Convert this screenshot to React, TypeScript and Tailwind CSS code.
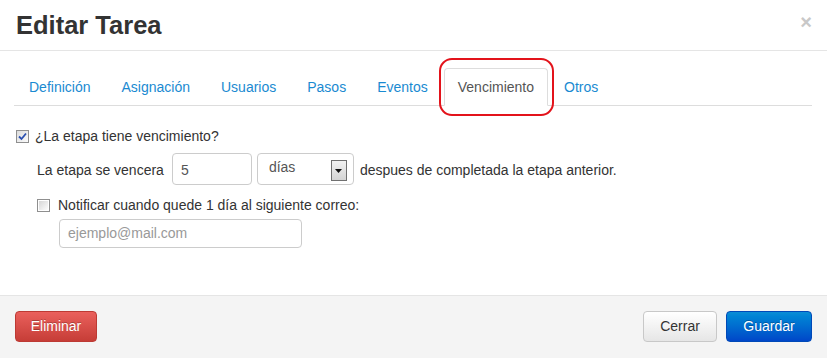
import React from "react";

const tabs = ["Definición", "Asignación", "Usuarios", "Pasos", "Eventos", "Vencimiento", "Otros"];

function CheckedBox() {
  return (
    <span className="inline-flex h-[13px] w-[13px] items-center justify-center border border-[#8f8f8f] bg-linear-to-br from-[#dcdcdc] to-[#fbfbfb]">
      <svg width="9" height="9" viewBox="0 0 9 9">
        <path d="M1 4.5 L3.5 7 L8 1.5" fill="none" stroke="#2a4fb0" strokeWidth="1.8" />
      </svg>
    </span>
  );
}

function EmptyBox() {
  return (
    <span className="inline-flex h-[13px] w-[13px] items-center justify-center border border-[#8f8f8f] bg-white">
      <span className="h-[9px] w-[9px] bg-linear-to-br from-[#d6d6d6] to-[#fcfcfc]" />
    </span>
  );
}

export default function App() {
  return (
    <div
      className="relative flex h-[358px] w-[827px] flex-col overflow-hidden bg-white text-[14px] text-[#333]"
      style={{ fontFamily: '"Liberation Sans", Arial, sans-serif' }}
    >
      {/* header */}
      <div className="flex h-[51px] shrink-0 items-center justify-between border-b border-[#e5e5e5] pl-[16px] pr-[15px]">
        <h3 className="text-[25.5px] font-bold leading-[30px] text-[#333]">Editar Tarea</h3>
        <span className="mt-[-6px] text-[20px] font-bold leading-none text-[#c8c8c8]">×</span>
      </div>

      {/* body */}
      <div className="flex flex-1 flex-col pl-[14px] pr-[15px] pt-[17px]">
        <div className="flex border-b border-[#ddd]">
          {tabs.map((t) => {
            const active = t === "Vencimiento";
            return (
              <div
                key={t}
                className={
                  active
                    ? "-mb-px mr-[1px] rounded-t-[4px] border border-[#ddd] border-b-white bg-white px-[13px] py-[8px] leading-[20px] text-[#555]"
                    : "-mb-px mr-[1px] border border-transparent px-[14px] py-[8px] leading-[20px] text-[#1a8ad1]"
                }
              >
                {t}
              </div>
            );
          })}
        </div>

        <div className="ml-[2px] mt-[20px] flex h-[20px] items-center">
          <CheckedBox />
          <span className="ml-[6px]">¿La etapa tiene vencimiento?</span>
        </div>

        <div className="ml-[23px] mt-[7px] flex items-center">
          <span className="mt-[2px]">La etapa se vencera</span>
          <div className="ml-[8px] flex h-[32px] w-[80px] items-start rounded-[4px] border border-[#ccc] pl-[8px] pt-[6px] leading-[20px] text-[#555]">
            5
          </div>
          <div className="ml-[5px] flex h-[32px] w-[97px] items-start justify-between rounded-[4px] border border-[#ccc] pl-[11px] pr-[6px] pt-[3px]">
            <span className="leading-[20px] text-[#555]">días</span>
            <span className="mt-[3px] flex h-[21px] w-[16px] items-center justify-center border border-[#707070] bg-linear-to-b from-[#f2f2f2] to-[#d4d4d4]">
              <svg width="7" height="4" viewBox="0 0 7 4">
                <path d="M0 0 H7 L3.5 4 Z" fill="#111" />
              </svg>
            </span>
          </div>
          <span className="ml-[6px] mt-[2px]">despues de completada la etapa anterior.</span>
        </div>

        <div className="ml-[23px] mt-[10px] flex h-[20px] items-center">
          <EmptyBox />
          <span className="ml-[8px]">Notificar cuando quede 1 día al siguiente correo:</span>
        </div>

        <div className="ml-[45px] mt-[4px] flex h-[29px] w-[243px] items-center rounded-[4px] border border-[#ccc] pl-[8px] text-[#999]">
          ejemplo@mail.com
        </div>
      </div>

      {/* footer */}
      <div className="flex h-[63px] shrink-0 items-start justify-between border-t border-[#e5e5e5] bg-[#f4f4f4] pl-[15px] pr-[15px] pt-[15px]">
        <button className="flex h-[31px] w-[82px] items-center justify-center rounded-[4px] border border-[#bd3a34] bg-linear-to-b from-[#ea605c] to-[#c63d37] text-white [text-shadow:0_-1px_0_rgba(0,0,0,0.25)]">
          Eliminar
        </button>
        <div className="flex">
          <button className="flex h-[31px] w-[74px] items-center justify-center rounded-[4px] border border-[#c8c8c8] bg-linear-to-b from-white to-[#e6e6e6] text-[#333]">
            Cerrar
          </button>
          <button className="ml-[9px] flex h-[31px] w-[86px] items-center justify-center rounded-[4px] border border-[#0049b8] bg-linear-to-b from-[#0b8dd6] to-[#0046c8] text-white [text-shadow:0_-1px_0_rgba(0,0,0,0.25)]">
            Guardar
          </button>
        </div>
      </div>

      {/* red annotation */}
      <div className="pointer-events-none absolute left-[439px] top-[58px] h-[58px] w-[115px] rounded-[13px] border-[2px] border-[#e3131b]" />
    </div>
  );
}
